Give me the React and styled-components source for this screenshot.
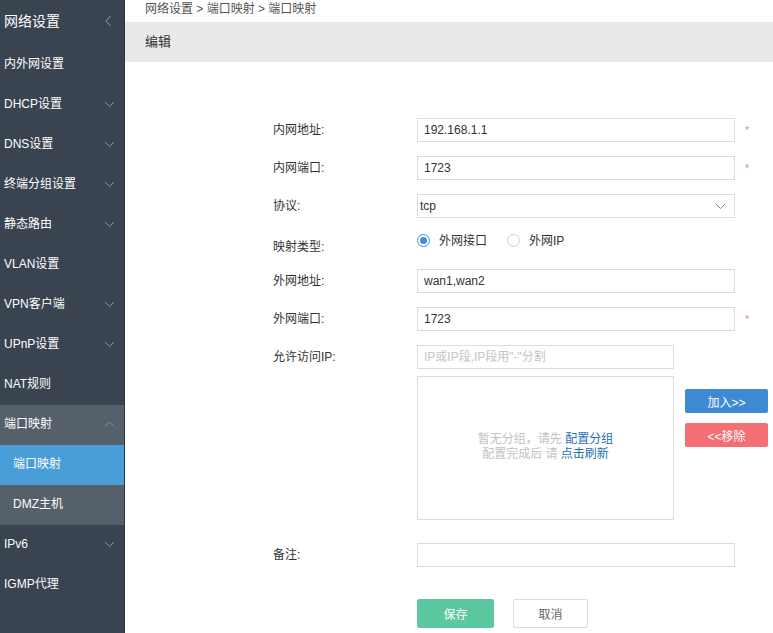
import React from "react";
import styled, { createGlobalStyle } from "styled-components";

const GlobalStyle = createGlobalStyle`
  html, body {
    margin: 0;
    padding: 0;
  }
  body {
    font-family: "Liberation Sans", "Noto Sans CJK SC", sans-serif;
    font-size: 12px;
    line-height: 16px;
    color: #333;
    background: #fff;
    overflow: hidden;
  }
`;

const Layout = styled.div`
  display: flex;
  height: 633px;
  overflow: hidden;
`;

const Sidebar = styled.nav`
  width: 124px;
  flex-shrink: 0;
  background: #3a4350;
  border-right: 1px solid #2d343e;
  display: flex;
  flex-direction: column;
`;

const SideHeader = styled.div`
  height: 45px;
  box-sizing: border-box;
  padding: 0 12px 4px 4px;
  display: flex;
  align-items: center;
  justify-content: space-between;
  font-size: 14px;
  color: #fff;
`;

const menuBg = {
  normal: "transparent",
  open: "#56606b",
  sub: "#56606b",
  active: "#4a9ed8",
};

const MenuItem = styled.div`
  height: 40px;
  box-sizing: border-box;
  padding: 0 9px 2px ${(p) => (p.$sub ? 13 : 4)}px;
  display: flex;
  align-items: center;
  justify-content: space-between;
  font-size: 12px;
  color: #fff;
  background: ${(p) => menuBg[p.$variant || "normal"]};
`;

const Main = styled.main`
  flex: 1;
  display: flex;
  flex-direction: column;
  background: #fff;
`;

const Breadcrumb = styled.div`
  height: 22px;
  padding-left: 20px;
  display: flex;
  align-items: center;
  padding-bottom: 4px;
  box-sizing: border-box;
  font-size: 12px;
  color: #555;
`;

const TitleBar = styled.div`
  height: 40px;
  padding-left: 20px;
  display: flex;
  align-items: center;
  background: #e9e9e9;
  font-size: 13px;
  color: #333;
`;

const Form = styled.div`
  padding: 49px 0 0 148px;
  display: flex;
  flex-direction: column;
`;

const Row = styled.div`
  display: flex;
  align-items: center;
  height: ${(p) => p.$h || 38}px;
`;

const Label = styled.div`
  width: 144px;
  flex-shrink: 0;
  font-size: 12px;
  color: #333;
  padding-top: ${(p) => p.$offset || 0}px;
`;

const Field = styled.div`
  width: ${(p) => p.$w || 318}px;
  height: 24px;
  box-sizing: border-box;
  border: 1px solid #dcdcdc;
  padding: 0 ${(p) => (p.$tight ? 8 : 6)}px 0 ${(p) => (p.$tight ? 2 : 6)}px;
  display: flex;
  align-items: center;
  justify-content: space-between;
  font-size: 12px;
  color: ${(p) => (p.$placeholder ? "#c4c4c4" : "#333")};
  background: #fff;
`;

const Star = styled.span`
  margin-left: 10px;
  color: #f08a96;
  font-size: 11px;
`;

const RadioGroup = styled.div`
  display: flex;
  align-items: center;
  margin-bottom: 6px;
`;

const RadioOption = styled.label`
  display: flex;
  align-items: center;
  gap: 9px;
  margin-right: 20px;
  font-size: 12px;
  color: #333;
`;

const RadioDot = styled.span`
  width: 13px;
  height: 13px;
  box-sizing: border-box;
  border-radius: 50%;
  border: 1px solid ${(p) => (p.$checked ? "#3d8ee0" : "#cfcfcf")};
  display: flex;
  align-items: center;
  justify-content: center;
  &::after {
    content: "";
    width: 7px;
    height: 7px;
    border-radius: 50%;
    background: ${(p) => (p.$checked ? "#3d8ee0" : "transparent")};
  }
`;

const GroupRow = styled.div`
  display: flex;
  align-items: flex-start;
  padding-left: 144px;
  margin-bottom: 16px;
`;

const GroupBox = styled.div`
  width: 257px;
  height: 144px;
  box-sizing: border-box;
  border: 1px solid #dcdcdc;
  display: flex;
  flex-direction: column;
  align-items: center;
  justify-content: center;
  font-size: 12px;
  line-height: 15px;
  color: #c2c2c2;
  padding-bottom: 2px;
`;

const Link = styled.span`
  color: #1f6fb2;
`;

const SideButtons = styled.div`
  display: flex;
  flex-direction: column;
  gap: 10px;
  margin-left: 11px;
  padding-top: 13px;
`;

const ActionButton = styled.button`
  width: 83px;
  height: 24px;
  border: none;
  border-radius: 2px;
  background: ${(p) => p.$bg};
  color: #fff;
  font-family: inherit;
  font-size: 12px;
  padding: 0;
`;

const Footer = styled.div`
  display: flex;
  gap: 19px;
  padding-left: 144px;
  margin-top: 25px;
`;

const FootButton = styled.button`
  width: ${(p) => p.$w}px;
  height: 29px;
  border-radius: 2px;
  border: 1px solid ${(p) => (p.$primary ? "#5bc89f" : "#dcdcdc")};
  background: ${(p) => (p.$primary ? "#5bc89f" : "#fff")};
  color: ${(p) => (p.$primary ? "#fff" : "#666")};
  font-family: inherit;
  font-size: 12px;
  padding: 0;
`;

function Chevron({ dir = "down", color = "#8b949e" }) {
  const pts = {
    down: "1,1 5.5,5.5 10,1",
    up: "1,5.5 5.5,1 10,5.5",
    left: "5.5,1 1,6 5.5,11",
  }[dir];
  const size = dir === "left" ? [7, 12] : [11, 7];
  return (
    <svg width={size[0]} height={size[1]} viewBox={`0 0 ${size[0]} ${size[1]}`}>
      <polyline points={pts} fill="none" stroke={color} strokeWidth="1" />
    </svg>
  );
}

const menu = [
  { label: "内外网设置" },
  { label: "DHCP设置", arrow: "down" },
  { label: "DNS设置", arrow: "down" },
  { label: "终端分组设置", arrow: "down" },
  { label: "静态路由", arrow: "down" },
  { label: "VLAN设置" },
  { label: "VPN客户端", arrow: "down" },
  { label: "UPnP设置", arrow: "down" },
  { label: "NAT规则" },
  { label: "端口映射", arrow: "up", variant: "open" },
  { label: "端口映射", sub: true, variant: "active" },
  { label: "DMZ主机", sub: true, variant: "sub" },
  { label: "IPv6", arrow: "down" },
  { label: "IGMP代理" },
];

export default function App() {
  return (
    <Layout>
      <GlobalStyle />
      <Sidebar>
        <SideHeader>
          <span>网络设置</span>
          <Chevron dir="left" color="#9aa2ac" />
        </SideHeader>
        {menu.map((m, i) => (
          <MenuItem key={i} $sub={m.sub} $variant={m.variant}>
            <span>{m.label}</span>
            {m.arrow && <Chevron dir={m.arrow} />}
          </MenuItem>
        ))}
      </Sidebar>

      <Main>
        <Breadcrumb>网络设置 &gt; 端口映射 &gt; 端口映射</Breadcrumb>
        <TitleBar>编辑</TitleBar>

        <Form>
          <Row>
            <Label>内网地址:</Label>
            <Field>192.168.1.1</Field>
            <Star>*</Star>
          </Row>
          <Row>
            <Label>内网端口:</Label>
            <Field>1723</Field>
            <Star>*</Star>
          </Row>
          <Row>
            <Label>协议:</Label>
            <Field $tight>
              <span>tcp</span>
              <Chevron dir="down" color="#888" />
            </Field>
          </Row>
          <Row $h={37}>
            <Label $offset={6}>映射类型:</Label>
            <RadioGroup>
              <RadioOption>
                <RadioDot $checked />
                外网接口
              </RadioOption>
              <RadioOption>
                <RadioDot />
                外网IP
              </RadioOption>
            </RadioGroup>
          </Row>
          <Row>
            <Label>外网地址:</Label>
            <Field>wan1,wan2</Field>
          </Row>
          <Row>
            <Label>外网端口:</Label>
            <Field>1723</Field>
            <Star>*</Star>
          </Row>
          <Row>
            <Label>允许访问IP:</Label>
            <Field $w={257} $placeholder>IP或IP段,IP段用"-"分割</Field>
          </Row>

          <GroupRow>
            <GroupBox>
              <div>
                暂无分组，请先 <Link>配置分组</Link>
              </div>
              <div>
                配置完成后 请 <Link>点击刷新</Link>
              </div>
            </GroupBox>
            <SideButtons>
              <ActionButton $bg="#3f8ad4">加入&gt;&gt;</ActionButton>
              <ActionButton $bg="#f36f74">&lt;&lt;移除</ActionButton>
            </SideButtons>
          </GroupRow>

          <Row>
            <Label>备注:</Label>
            <Field />
          </Row>

          <Footer>
            <FootButton $primary $w={77}>保存</FootButton>
            <FootButton $w={75}>取消</FootButton>
          </Footer>
        </Form>
      </Main>
    </Layout>
  );
}
